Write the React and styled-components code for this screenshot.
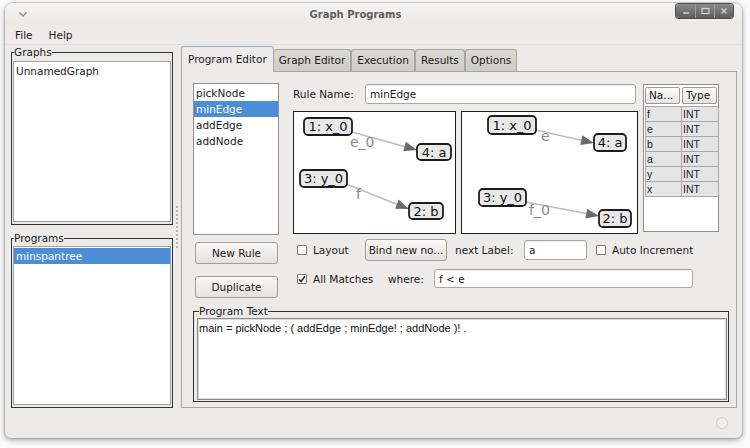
import React from "react";
import styled, { createGlobalStyle } from "styled-components";

const Global = createGlobalStyle`
  html, body { margin: 0; padding: 0; background: #fbfbfb; }
  body { font-family: "DejaVu Sans", "Noto Sans", sans-serif; font-size: 10.5px; color: #1b1b1b; }
  * { box-sizing: border-box; }
`;

const Screen = styled.div`
  width: 750px;
  height: 448px;
  padding: 3px 0 0 5px;
  background: #fbfbfb;
`;

const Window = styled.div`
  width: 737px;
  height: 435px;
  background: #edebe9;
  border-radius: 8px 8px 6px 6px;
  box-shadow: 0 0 0 1px rgba(0, 0, 0, 0.13), 0 2px 6px rgba(0, 0, 0, 0.35);
  display: flex;
  flex-direction: column;
  overflow: hidden;
`;

const TitleBar = styled.div`
  height: 22px;
  flex: none;
  display: flex;
  align-items: flex-start;
  background: linear-gradient(#f4f3f1, #ebe9e6);
`;

const MenuArrow = styled.div`
  width: 30px;
  padding: 9px 0 0 14px;
  display: flex;
`;

const Title = styled.div`
  flex: 1;
  text-align: center;
  padding-top: 4px;
  line-height: 16px;
  font-weight: bold;
  font-size: 10px;
  color: #5e5e5e;
`;

const WinButtons = styled.div`
  margin: 1px 9px 0 0;
  height: 14px;
  display: flex;
  border-radius: 3px;
  overflow: hidden;
  box-shadow: 0 0 0 1px #4c4c4c;
`;

const WinButton = styled.div`
  width: 19px;
  height: 14px;
  display: flex;
  align-items: center;
  justify-content: center;
  background: linear-gradient(#8a8a8a, #5d5d5d);
  border-left: ${(p) => (p.$first ? "none" : "1px solid #9c9c9c")};
`;

const MenuBar = styled.div`
  height: 20px;
  flex: none;
  display: flex;
  align-items: center;
  padding-left: 2px;
  border-bottom: 1px solid #e2dfdb;
`;

const MenuItem = styled.span`
  padding: 0 8px;
  color: #1b1b1b;
`;

const Main = styled.div`
  flex: 1;
  display: flex;
  padding: 1px 5px 0 6px;
  min-height: 0;
`;

const LeftCol = styled.div`
  width: 162px;
  flex: none;
  display: flex;
  flex-direction: column;
  gap: 7px;
`;

const Frame = styled.fieldset`
  margin: 0;
  min-width: 0;
  border: 1px solid #333;
  padding: ${(p) => p.$pad || "0 1px 2px 1px"};
  display: block;
  flex: none;
`;

const FrameLabel = styled.legend`
  padding: 0;
  margin-left: ${(p) => p.$off}px;
  line-height: 13px;
  font-size: 10.5px;
  color: #1b1b1b;
`;

const ListBox = styled.div`
  height: ${(p) => p.$h}px;
  background: #fff;
  border: 1px solid ${(p) => p.$border || "#a3a3a3"};
  padding-top: 1px;
  margin-top: ${(p) => p.$mt || 0}px;
`;

const ListItem = styled.div`
  height: 16px;
  line-height: 16px;
  padding-left: 2px;
  background: ${(p) => (p.$sel ? "#4b8ed6" : "transparent")};
  color: ${(p) => (p.$sel ? "#fff" : "#1b1b1b")};
  white-space: nowrap;
`;

const Splitter = styled.div`
  width: 8px;
  flex: none;
  display: flex;
  align-items: center;
  justify-content: center;
`;

const Grip = styled.div`
  height: 42px;
  border-left: 2px dotted #b5b2ae;
`;

const RightCol = styled.div`
  flex: 1;
  display: flex;
  flex-direction: column;
  min-width: 0;
`;

const TabRow = styled.div`
  height: 25px;
  flex: none;
  display: flex;
  align-items: flex-end;
`;

const Tab = styled.div`
  position: relative;
  z-index: ${(p) => (p.$active ? 1 : 0)};
  height: ${(p) => (p.$active ? 26 : 22)}px;
  margin-bottom: ${(p) => (p.$active ? -1 : 0)}px;
  padding: ${(p) => (p.$active ? "0 6px" : "0 5px")};
  line-height: ${(p) => (p.$active ? 24 : 21)}px;
  border: 1px solid #a8a49f;
  border-top-color: ${(p) => (p.$active ? "#8fb0d6" : "#a8a49f")};
  border-bottom: none;
  border-left-width: ${(p) => (p.$first || p.$active ? 1 : 0)}px;
  border-radius: 3px 3px 0 0;
  background: ${(p) =>
    p.$active ? "#edebe9" : "linear-gradient(#dcd8d3, #cfcbc5)"};
  white-space: nowrap;
`;

const Panel = styled.div`
  flex: 1;
  border: 1px solid #a8a49f;
  background: #edebe9;
  padding: 11px 7px 4px 11px;
  display: flex;
  flex-direction: column;
  min-height: 0;
`;

const Upper = styled.div`
  display: flex;
  flex: none;
`;

const RuleCol = styled.div`
  width: 86px;
  flex: none;
  display: flex;
  flex-direction: column;
`;

const Button = styled.div`
  width: ${(p) => p.$w}px;
  height: 22px;
  margin-top: ${(p) => p.$mt || 0}px;
  margin-left: ${(p) => p.$ml || 0}px;
  flex: none;
  border: 1px solid #a29e99;
  border-radius: 3px;
  background: linear-gradient(#f9f8f7, #e4e1dd);
  display: flex;
  align-items: center;
  justify-content: center;
  white-space: nowrap;
  color: #1b1b1b;
`;

const RightArea = styled.div`
  width: 426px;
  margin-left: 14px;
  display: flex;
  flex-direction: column;
`;

const TopRow = styled.div`
  display: flex;
  gap: 5px;
`;

const Middle = styled.div`
  width: 345px;
  display: flex;
  flex-direction: column;
`;

const FieldRow = styled.div`
  height: 21px;
  display: flex;
  align-items: center;
`;

const FieldLabel = styled.span`
  width: ${(p) => p.$w}px;
  margin-left: ${(p) => p.$ml || 0}px;
  flex: none;
  white-space: nowrap;
`;

const Entry = styled.div`
  width: ${(p) => p.$w}px;
  height: ${(p) => p.$h || 20}px;
  margin-left: ${(p) => p.$ml || 0}px;
  flex: none;
  background: #fff;
  border: 1px solid #aaa6a1;
  border-radius: 3px;
  box-shadow: inset 0 1px 1px rgba(0, 0, 0, 0.08);
  padding-left: 4px;
  display: flex;
  align-items: center;
  white-space: nowrap;
`;

const CanvasRow = styled.div`
  margin-top: 7px;
  display: flex;
  gap: 5px;
`;

const Canvas = styled.div`
  width: ${(p) => p.$w}px;
  height: 123px;
  border: 1px solid #1f1f1f;
  background: #fff;
  display: flex;
`;

const TableBox = styled.div`
  width: 76px;
  height: 148px;
  margin-top: 1px;
  border: 1px solid #8e8e8e;
  background: #fff;
  padding: 2px 0 0 1px;
  display: flex;
  flex-direction: column;
`;

const HeadRow = styled.div`
  display: flex;
  gap: 2px;
  height: 17px;
`;

const HeadCell = styled.div`
  width: 35px;
  height: 17px;
  border: 1px solid #9d9a96;
  border-radius: 2px;
  background: linear-gradient(#fbfbfa, #e7e5e2);
  padding-left: 3px;
  line-height: 15px;
  white-space: nowrap;
  overflow: hidden;
`;

const Grid = styled.div`
  margin-top: 2px;
  width: 73px;
  display: grid;
  grid-template-columns: 36px 37px;
  border-top: 1px solid #a8a8a8;
  border-left: 1px solid #a8a8a8;
`;

const Cell = styled.div`
  height: 15px;
  line-height: 14px;
  padding-left: 1px;
  background: #e4e4e4;
  border-right: 1px solid #a8a8a8;
  border-bottom: 1px solid #a8a8a8;
  font-family: "Liberation Sans", Arial, sans-serif;
  font-size: 10.5px;
  color: #222;
`;

const ControlRow = styled.div`
  height: ${(p) => p.$h}px;
  margin-top: ${(p) => p.$mt}px;
  display: flex;
  align-items: center;
  padding-left: 4px;
`;

const CheckField = styled.label`
  width: ${(p) => p.$w}px;
  margin-left: ${(p) => p.$ml || 0}px;
  flex: none;
  display: flex;
  align-items: center;
  gap: 6px;
  white-space: nowrap;
`;

const Box = styled.span`
  width: 10px;
  height: 10px;
  flex: none;
  background: #fff;
  border: 1px solid #7d7b78;
  border-radius: 1px;
  display: flex;
  align-items: center;
  justify-content: center;
`;

const ProgFrame = styled.fieldset`
  margin: 7px 0 0 0;
  min-width: 0;
  border: 1px solid #333;
  padding: 0 1px 1px 3px;
`;

const TextArea = styled.div`
  height: 82px;
  background: #fff;
  border: 1px solid #8c8c8c;
  box-shadow: inset 0 0 0 1px #dcdcdc;
  padding: 2px 1px;
  font-family: "Liberation Sans", Arial, sans-serif;
  font-size: 11px;
  line-height: 14px;
  color: #111;
  white-space: pre;
`;

const StatusBar = styled.div`
  height: 30px;
  flex: none;
  display: flex;
  align-items: center;
  justify-content: flex-end;
  padding-right: 14px;
`;

const StatusDot = styled.div`
  width: 12px;
  height: 12px;
  border-radius: 50%;
  border: 1px solid #cfcdca;
  background: #f1efed;
`;

function Node({ x, y, w, h = 17, label }) {
  return (
    <g>
      <rect x={x} y={y} width={w} height={h} rx="4" fill="#e8e8e8" stroke="#1d1d1d" strokeWidth="1.8" />
      <text
        x={x + w / 2}
        y={y + h / 2 + 4.6}
        textAnchor="middle"
        fontFamily="DejaVu Sans, sans-serif"
        fontSize="13"
        fill="#111"
      >
        {label}
      </text>
    </g>
  );
}

function Edge({ x1, y1, x2, y2, label, lx, ly }) {
  const dx = x2 - x1;
  const dy = y2 - y1;
  const len = Math.hypot(dx, dy);
  const ux = dx / len;
  const uy = dy / len;
  const bx = x2 - ux * 13;
  const by = y2 - uy * 13;
  const px = -uy * 5;
  const py = ux * 5;
  return (
    <g>
      <line x1={x1} y1={y1} x2={bx} y2={by} stroke="#bdbdbd" strokeWidth="1.6" />
      <polygon
        points={`${x2},${y2} ${bx + px},${by + py} ${bx - px},${by - py}`}
        fill="#6b6b6b"
      />
      <text x={lx} y={ly} fontFamily="DejaVu Sans, sans-serif" fontSize="14" fill="#8a8a8a">
        {label}
      </text>
    </g>
  );
}

function GraphLeft() {
  return (
    <svg width="161" height="121" viewBox="0 0 161 121">
      <Edge x1={58} y1={20} x2={123} y2={38} label="e_0" lx={56} ly={35} />
      <Edge x1={52} y1={72} x2={115} y2={97} label="f" lx={62} ly={87} />
      <Node x={10} y={6} w={48} h={17} label="1: x_0" />
      <Node x={123} y={32} w={34} h={16} label="4: a" />
      <Node x={6} y={58} w={47} h={17} label="3: y_0" />
      <Node x={115} y={91} w={34} h={16} label="2: b" />
    </svg>
  );
}

function GraphRight() {
  return (
    <svg width="175" height="121" viewBox="0 0 175 121">
      <Edge x1={74} y1={18} x2={132} y2={31} label="e" lx={79} ly={29} />
      <Edge x1={64} y1={90} x2={137} y2={104} label="f_0" lx={67} ly={103} />
      <Node x={26} y={4} w={48} h={18} label="1: x_0" />
      <Node x={132} y={22} w={32} h={17} label="4: a" />
      <Node x={17} y={77} w={47} h={17} label="3: y_0" />
      <Node x={137} y={98} w={32} h={17} label="2: b" />
    </svg>
  );
}

function Check({ checked }) {
  return (
    <Box>
      {checked && (
        <svg width="8" height="8" viewBox="0 0 8 8">
          <polyline points="1,4.2 3,6.4 7,1.2" fill="none" stroke="#2b2b2b" strokeWidth="1.6" />
        </svg>
      )}
    </Box>
  );
}

const vars = [
  ["f", "INT"],
  ["e", "INT"],
  ["b", "INT"],
  ["a", "INT"],
  ["y", "INT"],
  ["x", "INT"],
];

export default function App() {
  return (
    <>
      <Global />
      <Screen>
        <Window>
          <TitleBar>
            <MenuArrow>
              <svg width="8" height="5" viewBox="0 0 8 5">
                <polyline points="0.5,0.5 4,4 7.5,0.5" fill="none" stroke="#8a8a8a" strokeWidth="1.4" />
              </svg>
            </MenuArrow>
            <Title>Graph Programs</Title>
            <WinButtons>
              <WinButton $first>
                <svg width="8" height="8" viewBox="0 0 8 8">
                  <line x1="1" y1="6" x2="7" y2="6" stroke="#d2d2d2" strokeWidth="1.5" />
                </svg>
              </WinButton>
              <WinButton>
                <svg width="9" height="8" viewBox="0 0 9 8">
                  <rect x="1" y="1.5" width="7" height="5" fill="none" stroke="#d2d2d2" strokeWidth="1.2" />
                </svg>
              </WinButton>
              <WinButton>
                <svg width="8" height="8" viewBox="0 0 8 8">
                  <path d="M1.5 1.5 L6.5 6.5 M6.5 1.5 L1.5 6.5" stroke="#d2d2d2" strokeWidth="1.4" />
                </svg>
              </WinButton>
            </WinButtons>
          </TitleBar>
          <MenuBar>
            <MenuItem>File</MenuItem>
            <MenuItem>Help</MenuItem>
          </MenuBar>
          <Main>
            <LeftCol>
              <Frame>
                <FrameLabel $off={1}>Graphs</FrameLabel>
                <ListBox $h={161} $mt={2}>
                  <ListItem>UnnamedGraph</ListItem>
                </ListBox>
              </Frame>
              <Frame>
                <FrameLabel $off={1}>Programs</FrameLabel>
                <ListBox $h={159} $mt={1}>
                  <ListItem $sel>minspantree</ListItem>
                </ListBox>
              </Frame>
            </LeftCol>
            <Splitter>
              <Grip />
            </Splitter>
            <RightCol>
              <TabRow>
                <Tab $active>Program Editor</Tab>
                <Tab>Graph Editor</Tab>
                <Tab $first>Execution</Tab>
                <Tab $first>Results</Tab>
                <Tab $first>Options</Tab>
              </TabRow>
              <Panel>
                <Upper>
                  <RuleCol>
                    <ListBox $h={152} $border="#8f8f8f">
                      <ListItem>pickNode</ListItem>
                      <ListItem $sel>minEdge</ListItem>
                      <ListItem>addEdge</ListItem>
                      <ListItem>addNode</ListItem>
                    </ListBox>
                    <Button $w={83} $ml={2} $mt={7}>New Rule</Button>
                    <Button $w={83} $ml={2} $mt={12}>Duplicate</Button>
                  </RuleCol>
                  <RightArea>
                    <TopRow>
                      <Middle>
                        <FieldRow>
                          <FieldLabel $w={72}>Rule Name:</FieldLabel>
                          <Entry $w={271}>minEdge</Entry>
                        </FieldRow>
                        <CanvasRow>
                          <Canvas $w={163}>
                            <GraphLeft />
                          </Canvas>
                          <Canvas $w={177}>
                            <GraphRight />
                          </Canvas>
                        </CanvasRow>
                      </Middle>
                      <TableBox>
                        <HeadRow>
                          <HeadCell>Na...</HeadCell>
                          <HeadCell>Type</HeadCell>
                        </HeadRow>
                        <Grid>
                          {vars.map(([n, t]) => (
                            <React.Fragment key={n}>
                              <Cell>{n}</Cell>
                              <Cell>{t}</Cell>
                            </React.Fragment>
                          ))}
                        </Grid>
                      </TableBox>
                    </TopRow>
                    <ControlRow $h={22} $mt={5}>
                      <CheckField $w={68}>
                        <Check />
                        Layout
                      </CheckField>
                      <Button $w={82}>Bind new no...</Button>
                      <FieldLabel $w={69} $ml={8}>next Label:</FieldLabel>
                      <Entry $w={63}>a</Entry>
                      <CheckField $w={110} $ml={9}>
                        <Check />
                        Auto Increment
                      </CheckField>
                    </ControlRow>
                    <ControlRow $h={19} $mt={8}>
                      <CheckField $w={91}>
                        <Check checked />
                        All Matches
                      </CheckField>
                      <FieldLabel $w={46}>where:</FieldLabel>
                      <Entry $w={259} $h={19}>f &lt; e</Entry>
                    </ControlRow>
                  </RightArea>
                </Upper>
                <ProgFrame>
                  <FrameLabel $off={2}>Program Text</FrameLabel>
                  <TextArea>main = pickNode ; ( addEdge ; minEdge! ; addNode )! .</TextArea>
                </ProgFrame>
              </Panel>
            </RightCol>
          </Main>
          <StatusBar>
            <StatusDot />
          </StatusBar>
        </Window>
      </Screen>
    </>
  );
}
